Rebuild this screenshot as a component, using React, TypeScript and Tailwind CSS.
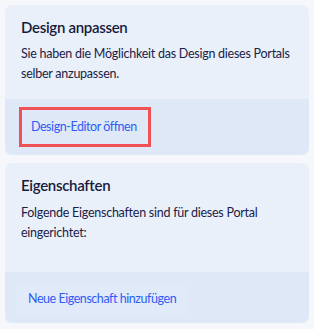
import React from "react";

const font = { fontFamily: 'Lato, "Noto Sans", sans-serif' };

export default function App() {
  return (
    <div className="min-h-[329px] w-[314px] bg-[#f5f7fa] p-[5px] flex flex-col gap-[8px]" style={font}>
      <div className="rounded-[7px] overflow-hidden bg-[#e9f0fa]">
        <div className="pt-[12px] px-[16px] pb-[15px]">
          <h2 className="text-[15px] leading-[20px] font-semibold tracking-[-0.3px] text-[#161b3d]">Design anpassen</h2>
          <p className="mt-[7px] text-[12.5px] leading-[20px] tracking-[-0.25px] text-[#1b2146]">
            Sie haben die Möglichkeit das Design dieses Portals selber anzupassen.
          </p>
        </div>
        <div className="bg-[#dee8f7] pt-[8px] pb-[8px] pl-[14px]">
          <button className="border-[3px] border-[#f05155] h-[40px] pl-[9px] pr-[11px] text-[12.5px] tracking-[-0.45px] text-[#2f5cf5] leading-[20px]">
            Design-Editor öffnen
          </button>
        </div>
      </div>
      <div className="rounded-[7px] overflow-hidden bg-[#e9f0fa]">
        <div className="pt-[12px] px-[16px] pb-[29px]">
          <h2 className="text-[15px] leading-[20px] font-semibold tracking-[-0.3px] text-[#161b3d]">Eigenschaften</h2>
          <p className="mt-[8px] text-[12.5px] leading-[20px] tracking-[-0.25px] text-[#1b2146]">
            Folgende Eigenschaften sind für dieses Portal eingerichtet:
          </p>
        </div>
        <div className="bg-[#dee8f7] pt-[12px] pb-[9px] pl-[12px]">
          <button className="h-[30px] px-[11px] rounded-[4px] bg-[#e1eaf8] text-[12.5px] tracking-[-0.45px] text-[#2f5cf5] leading-[20px]">
            Neue Eigenschaft hinzufügen
          </button>
        </div>
      </div>
    </div>
  );
}
